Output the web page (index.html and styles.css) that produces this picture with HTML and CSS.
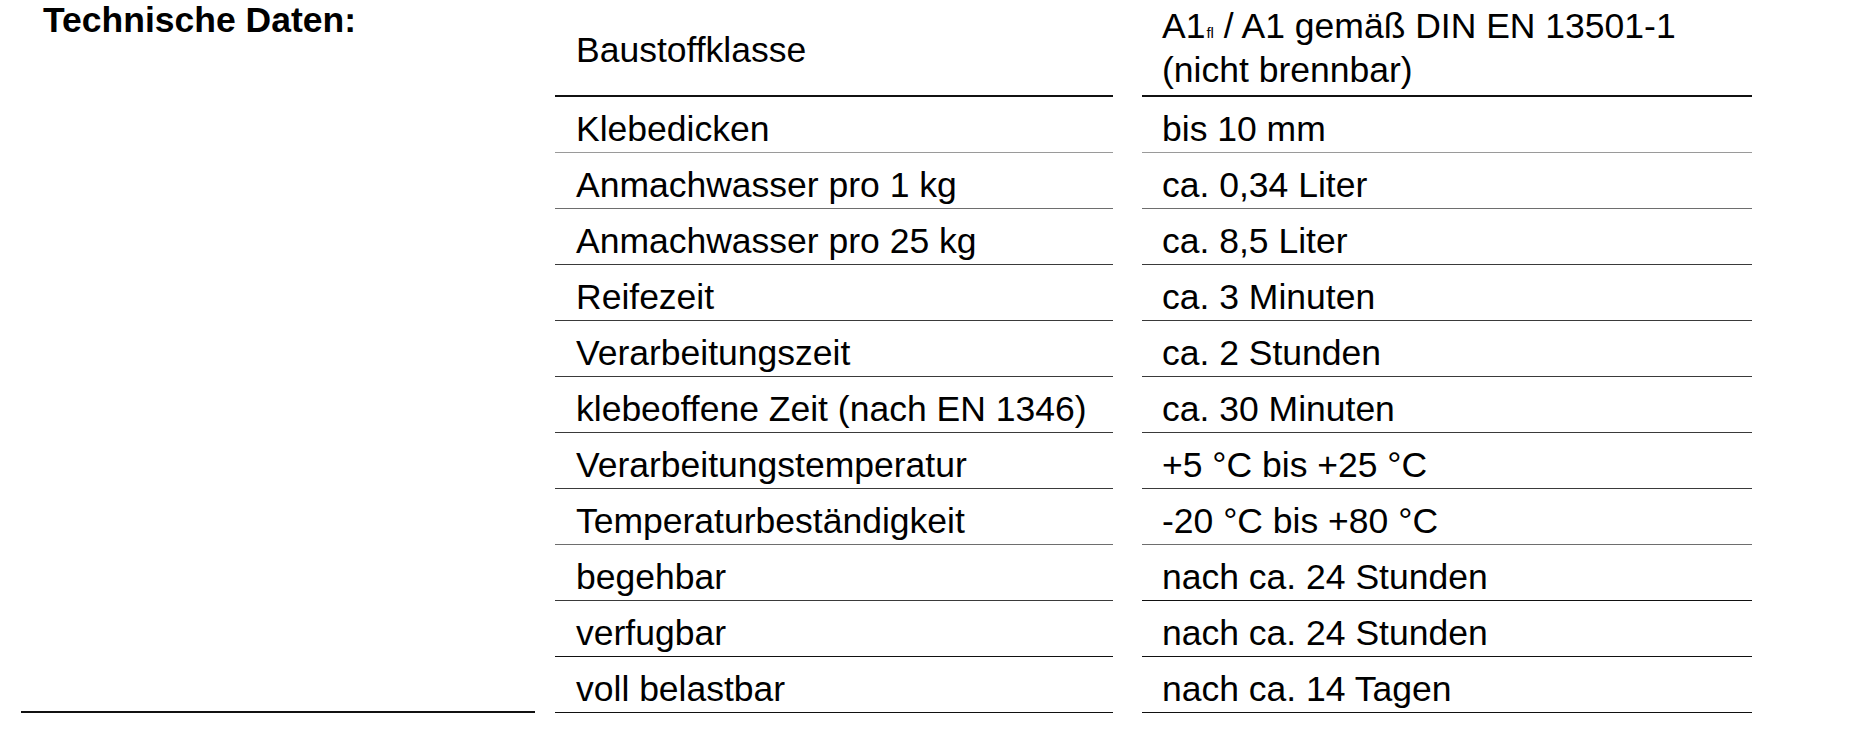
FILE: index.html
```html
<!DOCTYPE html>
<html lang="de">
<head>
<meta charset="utf-8">
<title>Technische Daten</title>
<link rel="stylesheet" href="styles.css">
</head>
<body>
<div class="page">
  <div class="side">
    <h2 class="heading">Technische Daten:</h2>
  </div>
  <div class="specs">
    <div class="cell key first strong">Baustoffklasse</div>
    <div class="cell val first strong"><span>A1<span class="idx">fl</span> / A1 gemäß DIN EN 13501-1</span><span>(nicht brennbar)</span></div>

    <div class="cell key soft">Klebedicken</div>
    <div class="cell val soft">bis 10 mm</div>

    <div class="cell key mid">Anmachwasser pro 1 kg</div>
    <div class="cell val mid">ca. 0,34 Liter</div>

    <div class="cell key dark">Anmachwasser pro 25 kg</div>
    <div class="cell val dark">ca. 8,5 Liter</div>

    <div class="cell key dark">Reifezeit</div>
    <div class="cell val dark">ca. 3 Minuten</div>

    <div class="cell key dark">Verarbeitungszeit</div>
    <div class="cell val dark">ca. 2 Stunden</div>

    <div class="cell key dark">klebeoffene Zeit (nach EN 1346)</div>
    <div class="cell val dark">ca. 30 Minuten</div>

    <div class="cell key dark">Verarbeitungstemperatur</div>
    <div class="cell val dark">+5 °C bis +25 °C</div>

    <div class="cell key mid">Temperaturbeständigkeit</div>
    <div class="cell val mid">-20 °C bis +80 °C</div>

    <div class="cell key dark">begehbar</div>
    <div class="cell val strong1">nach ca. 24 Stunden</div>

    <div class="cell key strong1">verfugbar</div>
    <div class="cell val strong1">nach ca. 24 Stunden</div>

    <div class="cell key strong1">voll belastbar</div>
    <div class="cell val strong1">nach ca. 14 Tagen</div>
  </div>
</div>
</body>
</html>
```

FILE: styles.css
```css
* {
  box-sizing: border-box;
}

html, body {
  margin: 0;
  padding: 0;
  background: #ffffff;
}

body {
  font-family: "Liberation Sans", Arial, Helvetica, sans-serif;
  font-size: 35.5px;
  color: #000000;
}

.page {
  display: flex;
  align-items: stretch;
  gap: 20px;
  padding-left: 21px;
  width: 1752px;
}

.side {
  width: 514px;
  flex: 0 0 514px;
  border-bottom: 2px solid #111111;
  padding-left: 22px;
}

.heading {
  margin: 0;
  font-size: 35.5px;
  font-weight: 700;
  line-height: 40px;
}

.specs {
  display: grid;
  grid-template-columns: 558px 610px;
  column-gap: 29px;
}

.cell {
  line-height: 44px;
  padding: 10px 0 1px 0;
  border-bottom: 1px solid #3a3a3a;
  white-space: nowrap;
}

.key {
  padding-left: 21px;
}

.val {
  padding-left: 20px;
}

.first {
  padding-top: 4px;
  padding-bottom: 3px;
}

.first.key {
  display: flex;
  align-items: center;
  padding-top: 6px;
  padding-bottom: 1px;
}

.first.val {
  display: flex;
  flex-direction: column;
}

.idx {
  font-size: 15px;
  line-height: 0;
  vertical-align: baseline;
  margin-left: 1px;
}

.strong {
  border-bottom: 2px solid #111111;
}

.strong1 {
  border-bottom: 1px solid #111111;
}

.soft {
  border-bottom: 1px solid #9a9a9a;
}

.mid {
  border-bottom: 1px solid #6e6e6e;
}

.dark {
  border-bottom: 1px solid #3a3a3a;
}
```
